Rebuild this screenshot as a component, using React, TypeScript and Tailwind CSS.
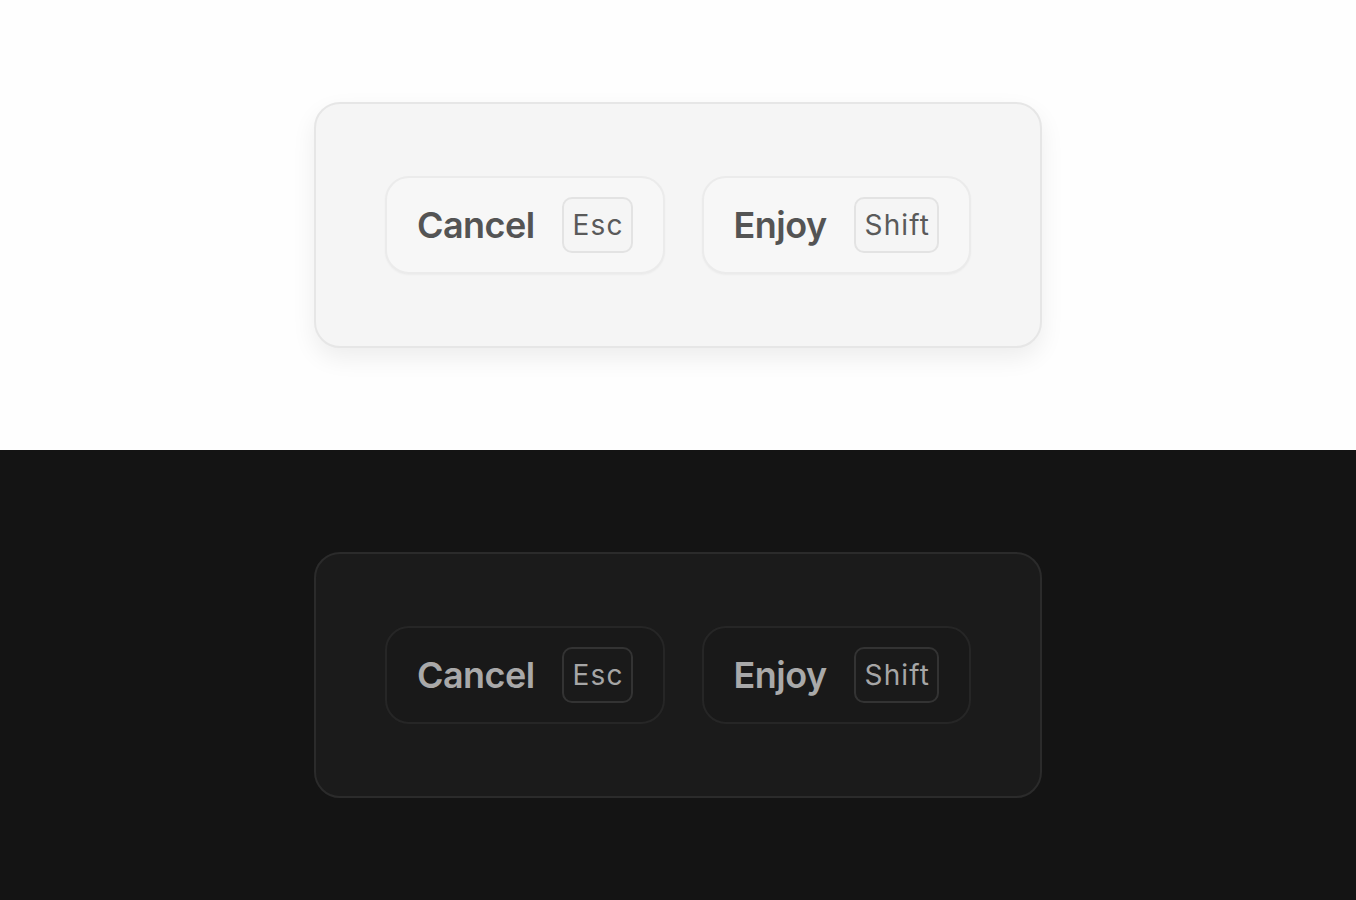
import type { ReactNode } from 'react';

type Mode = 'light' | 'dark';

const THEME = {
  light: {
    section: 'bg-[#fefefe]',
    card: 'bg-[#f5f5f5] border-[#e6e6e6] shadow-[0_10px_24px_rgba(0,0,0,0.07)]',
    button: 'bg-[#f7f7f7] border-[#ebebeb] shadow-[0_1px_2px_rgba(0,0,0,0.04)]',
    label: 'text-[#545454]',
    kbd: 'bg-[#f5f5f5] border-[#e3e3e3] text-[#5a5a5a]',
  },
  dark: {
    section: 'bg-[#141414]',
    card: 'bg-[#1b1b1b] border-[#2b2b2b]',
    button: 'bg-[#191919] border-[#262626]',
    label: 'text-[#a9a9a9]',
    kbd: 'bg-[#1a1a1a] border-[#333333] text-[#a6a6a6]',
  },
} as const;

function ShortcutButton({ mode, label, shortcut }: { mode: Mode; label: string; shortcut: ReactNode }) {
  const t = THEME[mode];
  return (
    <button
      type="button"
      className={`flex items-center gap-[27px] rounded-[24px] border-2 px-[30px] py-[19px] ${t.button}`}
    >
      <span className={`text-[36px] font-semibold leading-none tracking-[-0.015em] ${t.label}`}>{label}</span>
      <kbd
        className={`flex h-[56px] items-center rounded-[10px] border-2 pl-[9px] pr-[7px] text-[28px] font-normal leading-none tracking-[0.04em] ${t.kbd}`}
        style={{ fontFamily: 'Inter, sans-serif' }}
      >
        {shortcut}
      </kbd>
    </button>
  );
}

function Panel({ mode }: { mode: Mode }) {
  const t = THEME[mode];
  return (
    <section className={`flex h-[450px] items-center justify-center ${t.section}`}>
      <div className={`flex h-[246px] w-[728px] items-center justify-center gap-[37px] rounded-[26px] border-2 ${t.card}`}>
        <ShortcutButton mode={mode} label="Cancel" shortcut="Esc" />
        <ShortcutButton mode={mode} label="Enjoy" shortcut="Shift" />
      </div>
    </section>
  );
}

export default function App() {
  return (
    <main className="min-h-[900px] w-full" style={{ fontFamily: 'Inter, "Noto Sans", sans-serif' }}>
      <Panel mode="light" />
      <Panel mode="dark" />
    </main>
  );
}
